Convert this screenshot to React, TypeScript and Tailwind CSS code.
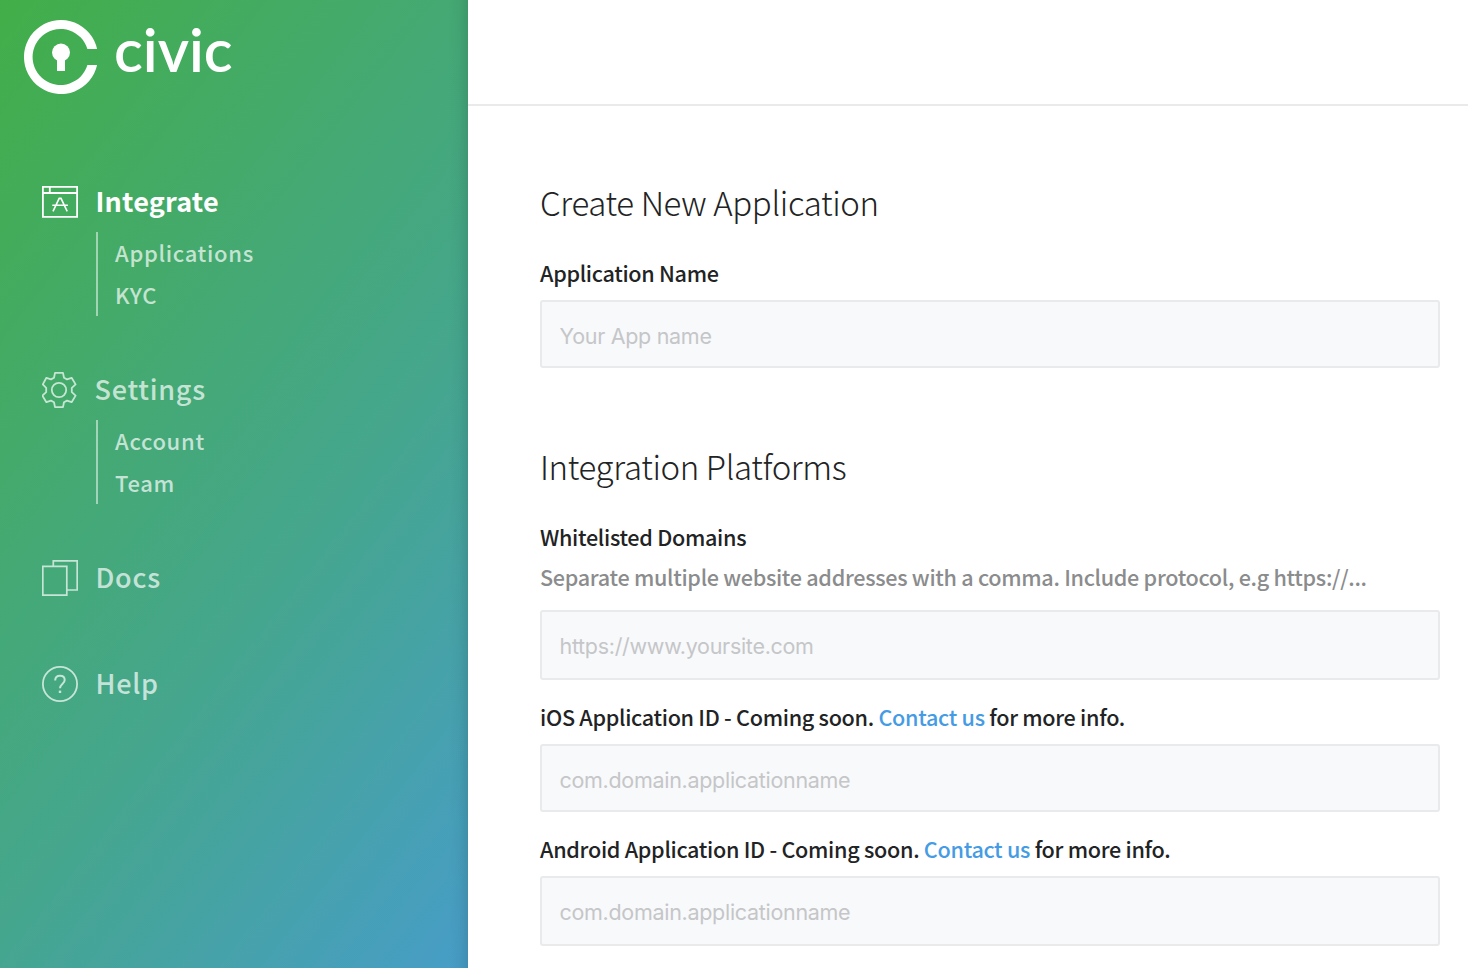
import React from "react";

const sans = "font-['Noto_Sans_CJK_SC',sans-serif]";

function Logo() {
  return (
    <div className="flex h-[94px] items-start pl-6 pt-5 text-white">
      <svg width="74" height="74" viewBox="0 0 74 74" fill="none" className="shrink-0">
        <path d="M73.1 29A37 37 0 1 0 73.1 45H63.4A28 28 0 1 1 63.4 29Z" fill="currentColor" />
        <circle cx="37" cy="32.5" r="9" fill="currentColor" />
        <path d="M33 38h8v13h-8z" fill="currentColor" />
      </svg>
      <span className="-mt-[2px] ml-4 font-['Lato',sans-serif] text-[60px] leading-[62px] font-semibold tracking-[0px]">civic</span>
    </div>
  );
}

function AppIcon() {
  return (
    <svg width="36" height="36" viewBox="0 0 36 36" fill="none" stroke="currentColor" strokeWidth="1.8">
      <path d="M.9 2.900h34.200v30H.9zM.9 9h34.200M7.800 3v6" />
      <path d="M11 27.400l6.200-13h1.800l6.200 13M10.300 21.300h15.600" strokeWidth="1.600" />
    </svg>
  );
}

function GearIcon() {
  return (
    <svg width="36" height="36" viewBox="0 0 36 36" fill="none" stroke="currentColor" strokeWidth="1.8" strokeLinejoin="round" className="-mr-px">
      <circle cx="17" cy="18" r="7.2" />
      <path d="M13 .9h8l1 4.8 3 1.7 4.600-1.600 4 6.600-3.800 3.400v4.400l3.800 3.400-4 6.600-4.600-1.600-3 1.700-1 4.800h-8l-1-4.800-3-1.700-4.600 1.600-4-6.600 3.800-3.400v-4.400L.8 12.400l3.600-6.600L9 7.400l3-1.700z" />
    </svg>
  );
}

function DocsIcon() {
  return (
    <svg width="36" height="36" viewBox="0 0 36 36" fill="none" stroke="currentColor" strokeWidth="1.7">
      <path d="M.8 6.300h24v28.900H.8zM11.300 6V.8h23.900V30H25" />
    </svg>
  );
}

function HelpIcon() {
  return (
    <svg width="36" height="36" viewBox="0 0 36 36" fill="none" stroke="currentColor" strokeWidth="1.8">
      <circle cx="18" cy="18" r="17.100" />
      <path d="M13.200 14.500c0-3 2-4.700 4.800-4.700s4.700 1.700 4.700 4.300c0 3.900-4.700 4-4.700 8.200" strokeWidth="2" />
      <path d="M16.800 24.600h2.400V27h-2.400z" fill="currentColor" stroke="none" />
    </svg>
  );
}

function MenuItem({ icon, label, active, items }: { icon: React.ReactNode; label: string; active?: boolean; items?: string[] }) {
  return (
    <div className={active ? "text-white" : "text-white/70"}>
      <a className="flex h-9 items-center gap-[17.500px]">
        {icon}
        <span className={active ? "h-[38px] text-[27px] leading-9 font-bold tracking-[0.2px]" : "h-[38px] text-[27px] leading-9 font-medium tracking-[0.750px]"}>{label}</span>
      </a>
      {items && (
        <ul className="mt-3 ml-[54px] border-l-2 border-white/50 pl-[17px] text-[22px] font-medium tracking-[0.7px] text-white/70">
          {items.map((item) => (
            <li key={item} className="h-[42px] leading-[41px]">{item}</li>
          ))}
        </ul>
      )}
    </div>
  );
}

function Field({ placeholder, tall }: { placeholder: string; tall?: boolean }) {
  return (
    <input
      placeholder={placeholder}
      className={
        "block w-full rounded-[3px] border-2 border-[#e9eaeb] bg-[#f8f9fb] px-[17.500px] font-['Inter',sans-serif] text-[21.500px] tracking-[-0.3px] outline-none placeholder:text-[#c5c6c8] " +
        (tall ? "h-[70px] pt-[2px]" : "h-[68px] pt-1")
      }
    />
  );
}

function Contact({ platform }: { platform: string }) {
  return (
    <>
      {platform} Application ID - Coming soon. <a className="text-[#459ce4]">Contact us</a> for more info.
    </>
  );
}

const heading = "text-[33px] leading-[48px] font-light tracking-[-0.370px] whitespace-nowrap";
const label = "block text-[21.600px] leading-8 font-medium tracking-[-0.300px] whitespace-nowrap";

export default function App() {
  return (
    <div className={"flex h-[968px] w-[1468px] overflow-hidden bg-white text-[#222324] " + sans}>
      <aside className="h-full w-[468px] shrink-0 bg-[linear-gradient(to_left,rgba(0,0,0,0.1)_0,rgba(0,0,0,0.03)_9px,transparent_20px),linear-gradient(128deg,#42ae48_0%,#45a68e_60%,#479dc8_100%)]">
        <Logo />
        <nav className="mt-[90px] flex flex-col pl-[42px]">
          <MenuItem icon={<AppIcon />} label="Integrate" active items={["Applications", "KYC"]} />
          <div className="mt-14">
            <MenuItem icon={<GearIcon />} label="Settings" items={["Account", "Team"]} />
          </div>
          <div className="mt-14">
            <MenuItem icon={<DocsIcon />} label="Docs" />
          </div>
          <div className="mt-[70px]">
            <MenuItem icon={<HelpIcon />} label="Help" />
          </div>
        </nav>
      </aside>
      <main className="flex-1">
        <header className="h-[106px] border-b-2 border-[#e9eaeb]" />
        <form className="w-[972px] pl-[72px]">
          <h1 className={heading + " mt-[72px]"}>Create New Application</h1>
          <label className={label + " mt-[31px] mb-[11px]"}>Application Name</label>
          <Field placeholder="Your App name" />
          <h1 className={heading + " mt-[74px]"}>Integration Platforms</h1>
          <label className={label + " mt-[31px]"}>Whitelisted Domains</label>
          <p className={label + " mt-2 mb-[17px] text-[#8b8c8d]"}>Separate multiple website addresses with a comma. Include protocol, e.g https://...</p>
          <Field placeholder="https://www.yoursite.com" tall />
          <label className={label + " mt-[21px] mb-[11px]"}><Contact platform="iOS" /></label>
          <Field placeholder="com.domain.applicationname" />
          <label className={label + " mt-[21px] mb-[11px]"}><Contact platform="Android" /></label>
          <Field placeholder="com.domain.applicationname" tall />
        </form>
      </main>
    </div>
  );
}
